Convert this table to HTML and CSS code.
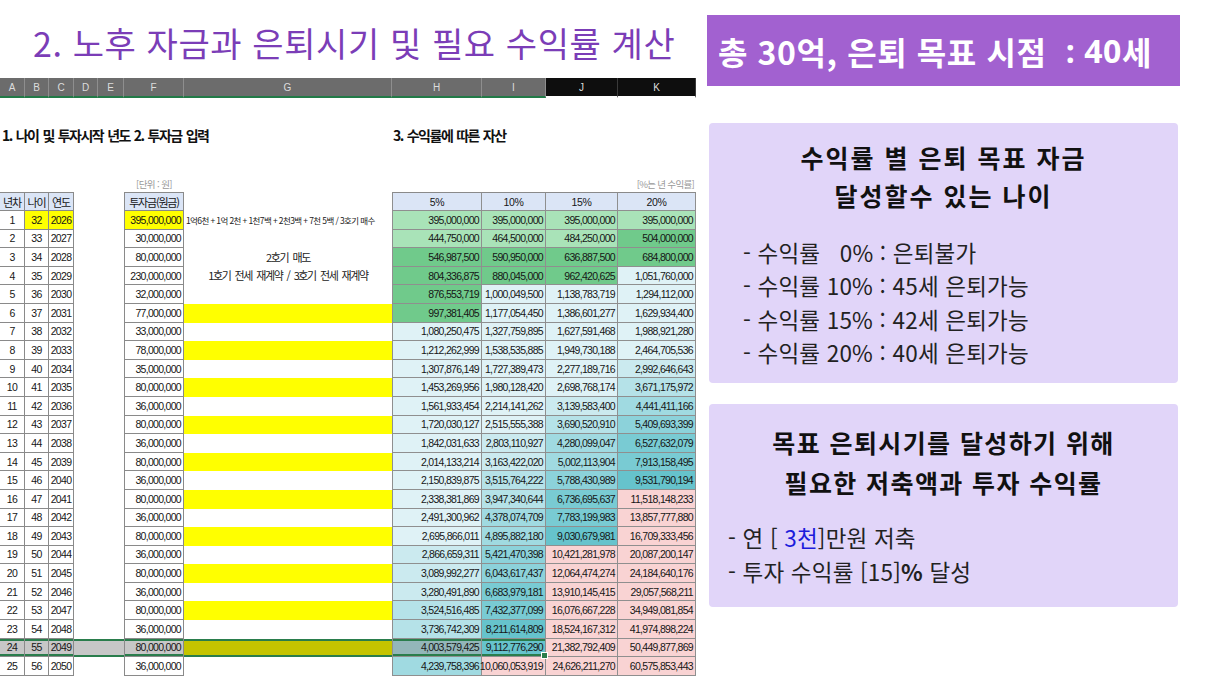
FILE: index.html
```html
<!DOCTYPE html>
<html lang="ko">
<head>
<meta charset="utf-8">
<title>노후 자금과 은퇴시기</title>
<link rel="stylesheet" href="styles.css">
</head>
<body>
<div class="page">
  <div class="left">
    <div class="title">2. 노후 자금과 은퇴시기 및 필요 수익률 계산</div>
    <div class="colbar">
      <div class="ch">A</div><div class="ch">B</div><div class="ch">C</div><div class="ch">D</div><div class="ch">E</div><div class="ch">F</div><div class="ch">G</div><div class="ch">H</div><div class="ch">I</div><div class="ch dk">J</div><div class="ch dk">K</div>
    </div>
    <div class="sheet">
      <div class="blank"></div>
      <div class="sec1 ko">1. 나이 및 투자시작 년도 2. 투자금 입력</div>
      <div class="sec3 ko">3. 수익률에 따른 자산</div>
      <div class="blank"></div>
      <div class="lab-a"></div>
      <div class="lab-f ko">[단위 : 원]</div>
      <div class="lab-g"></div>
      <div class="lab-k ko">[%는 년 수익률]</div>

      <div class="c hd ko n">년차</div><div class="c hd ko n">나이</div><div class="c hd ko n">연도</div><div class="e"></div><div class="e"></div><div class="c f hd ko n">투자금(원금)</div><div class="gw"></div><div class="v h hd n">5%</div><div class="v hd n">10%</div><div class="v hd n">15%</div><div class="v hd n">20%</div>

      <div class="c n">1</div><div class="c n y">32</div><div class="c n y">2026</div><div class="e"></div><div class="e"></div><div class="c f r y">395,000,000</div><div class="gw note ko">1억6천 + 1억 2천 + 1천7백 + 2천3백 + 7천 5백 / 3호기 매수</div><div class="v h g1">395,000,000</div><div class="v g1">395,000,000</div><div class="v g1">395,000,000</div><div class="v g1">395,000,000</div>

      <div class="c n">2</div><div class="c n">33</div><div class="c n">2027</div><div class="e"></div><div class="e"></div><div class="c f r">30,000,000</div><div class="merge ko"><span>2호기 매도</span><span>1호기 전세 재계약 / 3호기 전세 재계약</span></div><div class="v h g1">444,750,000</div><div class="v g1">464,500,000</div><div class="v g1">484,250,000</div><div class="v g2">504,000,000</div>

      <div class="c n">3</div><div class="c n">34</div><div class="c n">2028</div><div class="e"></div><div class="e"></div><div class="c f r">80,000,000</div><div class="v h g2">546,987,500</div><div class="v g2">590,950,000</div><div class="v g2">636,887,500</div><div class="v g2">684,800,000</div>

      <div class="c n">4</div><div class="c n">35</div><div class="c n">2029</div><div class="e"></div><div class="e"></div><div class="c f r">230,000,000</div><div class="v h g2">804,336,875</div><div class="v g2">880,045,000</div><div class="v g2">962,420,625</div><div class="v t0">1,051,760,000</div>

      <div class="c n">5</div><div class="c n">36</div><div class="c n">2030</div><div class="e"></div><div class="e"></div><div class="c f r">32,000,000</div><div class="v h g2">876,553,719</div><div class="v t0">1,000,049,500</div><div class="v t0">1,138,783,719</div><div class="v t0">1,294,112,000</div>

      <div class="c n">6</div><div class="c n">37</div><div class="c n">2031</div><div class="e"></div><div class="e"></div><div class="c f r">77,000,000</div><div class="gy"></div><div class="v h g2">997,381,405</div><div class="v t0">1,177,054,450</div><div class="v t0">1,386,601,277</div><div class="v t0">1,629,934,400</div>

      <div class="c n">7</div><div class="c n">38</div><div class="c n">2032</div><div class="e"></div><div class="e"></div><div class="c f r">33,000,000</div><div class="gw"></div><div class="v h t0">1,080,250,475</div><div class="v t0">1,327,759,895</div><div class="v t0">1,627,591,468</div><div class="v t0">1,988,921,280</div>

      <div class="c n">8</div><div class="c n">39</div><div class="c n">2033</div><div class="e"></div><div class="e"></div><div class="c f r">78,000,000</div><div class="gy"></div><div class="v h t0">1,212,262,999</div><div class="v t0">1,538,535,885</div><div class="v t0">1,949,730,188</div><div class="v t0">2,464,705,536</div>

      <div class="c n">9</div><div class="c n">40</div><div class="c n">2034</div><div class="e"></div><div class="e"></div><div class="c f r">35,000,000</div><div class="gw"></div><div class="v h t0">1,307,876,149</div><div class="v t0">1,727,389,473</div><div class="v t0">2,277,189,716</div><div class="v t1">2,992,646,643</div>

      <div class="c n">10</div><div class="c n">41</div><div class="c n">2035</div><div class="e"></div><div class="e"></div><div class="c f r">80,000,000</div><div class="gy"></div><div class="v h t0">1,453,269,956</div><div class="v t0">1,980,128,420</div><div class="v t0">2,698,768,174</div><div class="v t2">3,671,175,972</div>

      <div class="c n">11</div><div class="c n">42</div><div class="c n">2036</div><div class="e"></div><div class="e"></div><div class="c f r">36,000,000</div><div class="gw"></div><div class="v h t0">1,561,933,454</div><div class="v t0">2,214,141,262</div><div class="v t1">3,139,583,400</div><div class="v t3">4,441,411,166</div>

      <div class="c n">12</div><div class="c n">43</div><div class="c n">2037</div><div class="e"></div><div class="e"></div><div class="c f r">80,000,000</div><div class="gy"></div><div class="v h t0">1,720,030,127</div><div class="v t0">2,515,555,388</div><div class="v t2">3,690,520,910</div><div class="v t4">5,409,693,399</div>

      <div class="c n">13</div><div class="c n">44</div><div class="c n">2038</div><div class="e"></div><div class="e"></div><div class="c f r">36,000,000</div><div class="gw"></div><div class="v h t0">1,842,031,633</div><div class="v t1">2,803,110,927</div><div class="v t3">4,280,099,047</div><div class="v t5">6,527,632,079</div>

      <div class="c n">14</div><div class="c n">45</div><div class="c n">2039</div><div class="e"></div><div class="e"></div><div class="c f r">80,000,000</div><div class="gy"></div><div class="v h t0">2,014,133,214</div><div class="v t1">3,163,422,020</div><div class="v t3">5,002,113,904</div><div class="v t5">7,913,158,495</div>

      <div class="c n">15</div><div class="c n">46</div><div class="c n">2040</div><div class="e"></div><div class="e"></div><div class="c f r">36,000,000</div><div class="gw"></div><div class="v h t0">2,150,839,875</div><div class="v t2">3,515,764,222</div><div class="v t4">5,788,430,989</div><div class="v t6">9,531,790,194</div>

      <div class="c n">16</div><div class="c n">47</div><div class="c n">2041</div><div class="e"></div><div class="e"></div><div class="c f r">80,000,000</div><div class="gy"></div><div class="v h t0">2,338,381,869</div><div class="v t2">3,947,340,644</div><div class="v t5">6,736,695,637</div><div class="v pk">11,518,148,233</div>

      <div class="c n">17</div><div class="c n">48</div><div class="c n">2042</div><div class="e"></div><div class="e"></div><div class="c f r">36,000,000</div><div class="gw"></div><div class="v h t0">2,491,300,962</div><div class="v t3">4,378,074,709</div><div class="v t5">7,783,199,983</div><div class="v pk">13,857,777,880</div>

      <div class="c n">18</div><div class="c n">49</div><div class="c n">2043</div><div class="e"></div><div class="e"></div><div class="c f r">80,000,000</div><div class="gy"></div><div class="v h t0">2,695,866,011</div><div class="v t3">4,895,882,180</div><div class="v t6">9,030,679,981</div><div class="v pk">16,709,333,456</div>

      <div class="c n">19</div><div class="c n">50</div><div class="c n">2044</div><div class="e"></div><div class="e"></div><div class="c f r">36,000,000</div><div class="gw"></div><div class="v h t1">2,866,659,311</div><div class="v t4">5,421,470,398</div><div class="v pk">10,421,281,978</div><div class="v pk">20,087,200,147</div>

      <div class="c n">20</div><div class="c n">51</div><div class="c n">2045</div><div class="e"></div><div class="e"></div><div class="c f r">80,000,000</div><div class="gy"></div><div class="v h t1">3,089,992,277</div><div class="v t4">6,043,617,437</div><div class="v pk">12,064,474,274</div><div class="v pk">24,184,640,176</div>

      <div class="c n">21</div><div class="c n">52</div><div class="c n">2046</div><div class="e"></div><div class="e"></div><div class="c f r">36,000,000</div><div class="gw"></div><div class="v h t1">3,280,491,890</div><div class="v t5">6,683,979,181</div><div class="v pk">13,910,145,415</div><div class="v pk">29,057,568,211</div>

      <div class="c n">22</div><div class="c n">53</div><div class="c n">2047</div><div class="e"></div><div class="e"></div><div class="c f r">80,000,000</div><div class="gy"></div><div class="v h t2">3,524,516,485</div><div class="v t5">7,432,377,099</div><div class="v pk">16,076,667,228</div><div class="v pk">34,949,081,854</div>

      <div class="c n">23</div><div class="c n">54</div><div class="c n">2048</div><div class="e"></div><div class="e"></div><div class="c f r">36,000,000</div><div class="gw"></div><div class="v h t2">3,736,742,309</div><div class="v t6">8,211,614,809</div><div class="v pk">18,524,167,312</div><div class="v pk">41,974,898,224</div>

      <div class="c n sel sl">24</div><div class="c n sel sl">55</div><div class="c n sel sl">2049</div><div class="e sel sl"></div><div class="e sel sl"></div><div class="c f r sel sl">80,000,000</div><div class="gsel sl"></div><div class="v h hsel sl">4,003,579,425</div><div class="v t6 sl handle">9,112,776,290</div><div class="v pk">21,382,792,409</div><div class="v pk">50,449,877,869</div>

      <div class="c n">25</div><div class="c n">56</div><div class="c n">2050</div><div class="e"></div><div class="e"></div><div class="c f r">36,000,000</div><div class="gw"></div><div class="v h t3">4,239,758,396</div><div class="v pk">10,060,053,919</div><div class="v pk">24,626,211,270</div><div class="v pk">60,575,853,443</div>
    </div>
  </div>

  <div class="right">
    <div class="banner">총 30억, 은퇴 목표 시점&nbsp;&nbsp;<span class="lat">: 40</span>세</div>
    <div class="panel p1">
      <div class="ptitle"><div>수익률 별 은퇴 목표 자금</div><div>달성할수 있는 나이</div></div>
      <ul class="items">
        <li>- 수익률&nbsp;&nbsp;&nbsp;0% : 은퇴불가</li>
        <li>- 수익률 10% : 45세 은퇴가능</li>
        <li>- 수익률 15% : 42세 은퇴가능</li>
        <li>- 수익률 20% : 40세 은퇴가능</li>
      </ul>
    </div>
    <div class="panel p2">
      <div class="ptitle"><div>목표 은퇴시기를 달성하기 위해</div><div>필요한 저축액과 투자 수익률</div></div>
      <ul class="items">
        <li>- 연 [ <span class="blue">3천</span>]만원 저축</li>
        <li>- 투자 수익률 [15]<b>%</b> 달성</li>
      </ul>
    </div>
  </div>
</div>
</body>
</html>
```

FILE: styles.css
```css
*{box-sizing:border-box;margin:0;padding:0}
html,body{width:1216px;height:684px;overflow:hidden;background:#fff}
body{font-family:"Noto Sans CJK KR","Noto Sans",sans-serif;color:#111}
:root{--cols:25px 24px 25px 24px 26px 60px 208px 90px 64px 72px 78px}

.page{display:flex;height:684px}
.left{width:702px;flex:none}

.title{height:78px;padding:6px 0 0 33px;display:flex;align-items:center;font-size:34px;font-weight:400;color:#7b3db7;letter-spacing:0.6px;white-space:nowrap}

.colbar{display:grid;grid-template-columns:var(--cols);height:20px}
.ch{background:#6c6c6c;border-right:1px solid #8e8e8e;border-bottom:2px solid #227a47;color:#dcdcdc;font:10px "Liberation Sans",sans-serif;display:flex;align-items:center;justify-content:center}
.ch.dk{background:#0e0e0e;border-right-color:#3a3a3a;border-bottom:2px solid #fff}

.sheet{display:grid;grid-template-columns:var(--cols);grid-template-rows:24px 26px 26px 18px 19px repeat(25,18.6px);font:10.5px "Liberation Sans",sans-serif;letter-spacing:-0.7px;color:#161616}
.ko{font-family:"Noto Sans CJK KR",sans-serif}
.blank{grid-column:1 / -1}
.sec1{grid-column:1 / 8;display:flex;align-items:center;padding-left:2px;font-size:14px;font-weight:700;letter-spacing:-1.5px;word-spacing:1.5px;color:#111;white-space:nowrap}
.sec3{grid-column:8 / 12;display:flex;align-items:center;padding-left:1px;font-size:14px;font-weight:700;letter-spacing:-1.5px;word-spacing:1.5px;color:#111;white-space:nowrap}
.lab-a{grid-column:1 / 6}
.lab-f{display:flex;align-items:flex-end;justify-content:center;font-size:9.5px;letter-spacing:-0.6px;color:#9a9a9a;white-space:nowrap;padding-bottom:1px}
.lab-g{grid-column:7 / 11}
.lab-k{display:flex;align-items:flex-end;justify-content:flex-end;font-size:9.5px;letter-spacing:-0.7px;color:#9a9a9a;white-space:nowrap;padding:0 2px 1px 0}

.c,.v,.e,.gw,.gy,.gsel{display:flex;align-items:center;white-space:nowrap}
.c{border-right:1px solid #8a8a8a;border-bottom:1px solid #8a8a8a;background:#fff}
.c.f{border-left:1px solid #8a8a8a}
.n{justify-content:center}
.r{justify-content:flex-end;padding-right:2px}
.hd{background:#dbe5f6;border-top:1px solid #8a8a8a}
.c.hd.ko{font-size:11px;letter-spacing:-1.2px}
.y{background:#ffff00}

.gy{background:#ffff00}
.note{font-size:8.5px;letter-spacing:-0.6px;padding-left:2px;color:#222}
.merge{grid-row:span 4;display:flex;flex-direction:column;align-items:center;justify-content:center;gap:2px;font-size:11px;letter-spacing:-1.4px;word-spacing:2.5px;color:#222;padding-bottom:2px}

.v{justify-content:flex-end;padding-right:2px;border-right:1px solid #8f8f8f;border-bottom:1px solid #8f8f8f}
.v.h{border-left:1px solid #8f8f8f}
.v.hd{justify-content:center;padding-right:0;letter-spacing:-0.3px}
.g1{background:#a9e3b8}
.g2{background:#70ca8b}
.t0{background:#dff2f6}
.t1{background:#cbeaef}
.t2{background:#b5e2e8}
.t3{background:#a0dae1}
.t4{background:#8cd2da}
.t5{background:#79cbd3}
.t6{background:#66c3cc}
.pk{background:#f9d3d3}

.sel{background:#c7c7c7}
.gsel{background:#c5c400}
.hsel{background:#93b6b9}
.sl{box-shadow:inset 0 2px 0 #2a7d4c,inset 0 -2px 0 #2a7d4c}
.handle{position:relative}
.handle::after{content:"";position:absolute;right:-3px;bottom:-3px;width:5px;height:5px;background:#2a7d4c;border:1px solid #fff}

.right{flex:none;width:480px;margin-left:5px;padding-top:15px}
.banner{width:473px;height:71px;background:#a261d0;color:#fff;font-weight:700;font-size:32px;letter-spacing:0.6px;display:flex;align-items:center;padding-left:11px;white-space:pre}
.lat{font-family:"Noto Sans","Liberation Sans",sans-serif}
.panel{margin-left:2px;width:469px;background:#e1d5f9;border-radius:4px}
.p1{margin-top:37px;height:260px;padding:15px 0 13px 34px}
.p2{margin-top:21px;height:203px;padding:18px 0 19px 19px}
.ptitle{text-align:center;font-weight:700;font-size:25px;letter-spacing:1.4px;color:#111}
.p1 .ptitle{line-height:38px;margin-left:-34px;letter-spacing:2px}
.p2 .ptitle{line-height:40px;margin-left:-19px}
.items{list-style:none;font-size:22.5px;letter-spacing:0.2px;color:#222;white-space:nowrap}
.p1 .items{margin-top:22px;line-height:33.4px}
.p2 .items{margin-top:18px;line-height:34px}
.blue{color:#1c1cdc}
.items b{font-weight:700}
```
